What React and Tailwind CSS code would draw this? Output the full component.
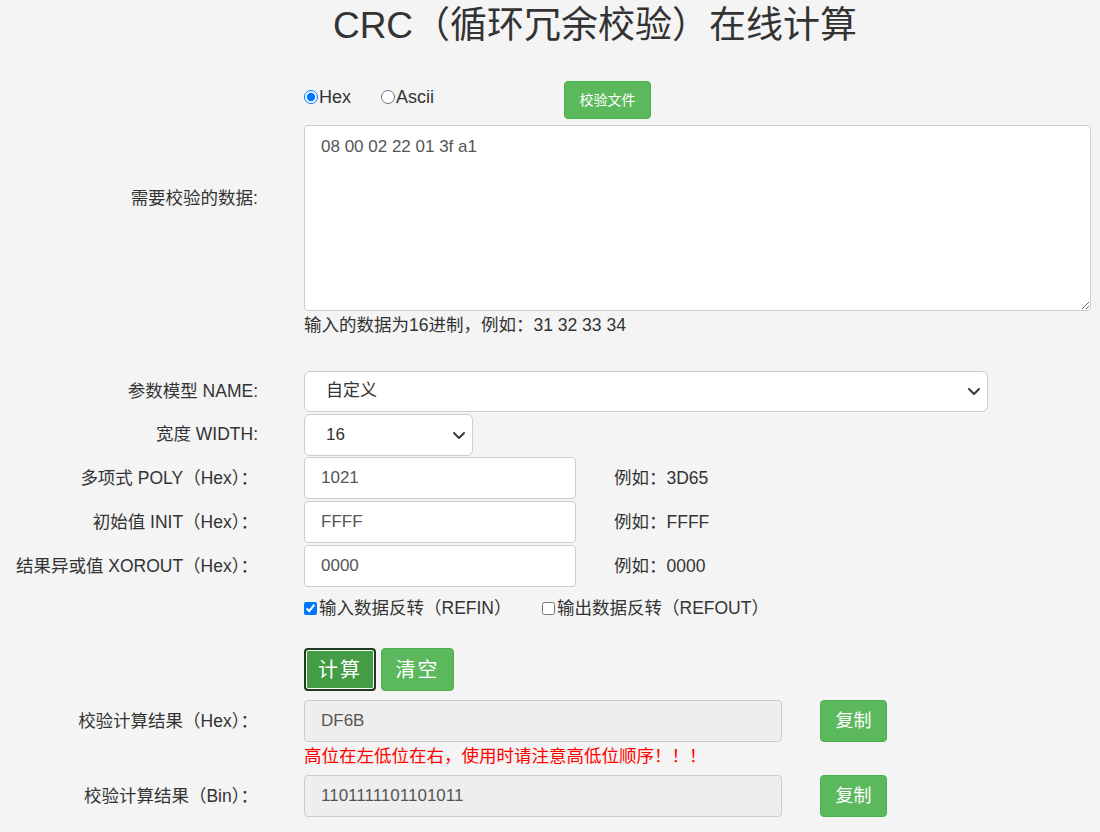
import React from "react";

const font = { fontFamily: '"Liberation Sans", Arial, "Noto Sans CJK SC", sans-serif' };

function Chevron() {
  return (
    <svg className="pointer-events-none absolute right-[6px] top-1/2 -translate-y-1/2" width="14" height="10" viewBox="0 0 14 10">
      <path d="M2 3l5 5 5-5" fill="none" stroke="#343a40" strokeWidth="2" strokeLinecap="round" strokeLinejoin="round" />
    </svg>
  );
}

function Label({ children, className = "" }) {
  return (
    <div className={"w-[258px] shrink-0 text-right text-[17.5px] text-[#333] " + className}>{children}</div>
  );
}

function HexRow({ label, value, example }) {
  return (
    <div className="flex items-center h-[44px]">
      <Label>{label}</Label>
      <div className="ml-[46px] w-[272px] h-[42px] bg-white border border-[#ccc] rounded-[4px] flex items-center pl-[16px] text-[17px] text-[#555]">
        {value}
      </div>
      <div className="ml-[38px] text-[17.5px] text-[#333]">{example}</div>
    </div>
  );
}

export default function App() {
  return (
    <div className="min-h-[832px] w-[1100px] bg-[#f4f4f4] text-[#333]" style={font}>
      <h1 className="text-center text-[37px] leading-[52px] pt-0 pl-[90px] text-[#333] font-normal">
        CRC（循环冗余校验）在线计算
      </h1>

      <div className="flex items-center mt-[29px] h-[38px] pl-[304px]">
        <label className="flex items-center text-[18px] w-[77px] -mt-[6px]">
          <input type="radio" name="t" defaultChecked className="m-0 mr-[1px] w-[14px] h-[14px]" />
          Hex
        </label>
        <label className="flex items-center text-[18px] w-[183px] -mt-[6px]">
          <input type="radio" name="t" className="m-0 mr-[1px] w-[14px] h-[14px]" />
          Ascii
        </label>
        <button className="h-[38px] w-[87px] rounded-[4px] bg-[#5cb85c] border border-[#4cae4c] text-white text-[14px]">
          校验文件
        </button>
      </div>

      <div className="flex items-start mt-[6px]">
        <Label className="pt-[60px]">需要校验的数据:</Label>
        <textarea
          className="ml-[46px] w-[787px] h-[186px] bg-white border border-[#ccc] rounded-[4px] px-[16px] py-[8px] text-[17px] text-[#555] outline-none"
          style={font}
          defaultValue="08 00 02 22 01 3f a1"
        />
      </div>
      <div className="pl-[304px] text-[17.5px] leading-[26px] mt-[1px]">输入的数据为16进制，例如：31 32 33 34</div>

      <div className="flex items-center mt-[32px] h-[42px]">
        <Label>参数模型 NAME:</Label>
        <div className="relative ml-[46px] w-[684px] h-[41px] bg-white border border-[#ccc] rounded-[6px] flex items-center pl-[21px] text-[17px] text-[#333]">
          自定义
          <Chevron />
        </div>
      </div>
      <div className="flex items-center h-[43px] mt-[1px]">
        <Label>宽度 WIDTH:</Label>
        <div className="relative ml-[46px] w-[169px] h-[42px] bg-white border border-[#ccc] rounded-[6px] flex items-center pl-[21px] text-[17px] text-[#333]">
          16
          <Chevron />
        </div>
      </div>

      <HexRow label="多项式 POLY（Hex）：" value="1021" example="例如：3D65" />
      <HexRow label="初始值 INIT（Hex）：" value="FFFF" example="例如：FFFF" />
      <HexRow label="结果异或值 XOROUT（Hex）：" value="0000" example="例如：0000" />

      <div className="flex items-center pl-[304px] mt-[7px] h-[26px] text-[17.5px]">
        <label className="flex items-center w-[238px]">
          <input type="checkbox" defaultChecked className="m-0 mr-[2px] w-[13px] h-[13px]" />
          输入数据反转（REFIN）
        </label>
        <label className="flex items-center">
          <input type="checkbox" className="m-0 mr-[2px] w-[13px] h-[13px]" />
          输出数据反转（REFOUT）
        </label>
      </div>

      <div className="flex pl-[304px] mt-[27px] gap-[5px]">
        <button className="h-[43px] w-[72px] rounded-[4px] bg-[#449d44] border-2 border-[#1e3d1e] ring-1 ring-white ring-inset text-white text-[20px] tracking-[2px]">
          计算
        </button>
        <button className="h-[43px] w-[73px] rounded-[4px] bg-[#5cb85c] border border-[#4cae4c] text-white text-[20px] tracking-[2px]">
          清空
        </button>
      </div>

      <div className="flex items-center mt-[9px] h-[42px]">
        <Label>校验计算结果（Hex）：</Label>
        <div className="ml-[46px] w-[478px] h-[42px] bg-[#eeeeee] border border-[#ccc] rounded-[4px] flex items-center pl-[16px] text-[17px] text-[#555]">
          DF6B
        </div>
        <button className="ml-[38px] h-[42px] w-[67px] rounded-[4px] bg-[#5cb85c] border border-[#4cae4c] text-white text-[18px]">
          复制
        </button>
      </div>
      <div className="pl-[304px] text-[17.5px] leading-[26px] mt-[1px] text-[#ff0000]">高位在左低位在右，使用时请注意高低位顺序！！！</div>

      <div className="flex items-center mt-[6px] h-[42px]">
        <Label>校验计算结果（Bin）：</Label>
        <div className="ml-[46px] w-[478px] h-[42px] bg-[#eeeeee] border border-[#ccc] rounded-[4px] flex items-center pl-[16px] text-[17px] text-[#555]">
          1101111101101011
        </div>
        <button className="ml-[38px] h-[42px] w-[67px] rounded-[4px] bg-[#5cb85c] border border-[#4cae4c] text-white text-[18px]">
          复制
        </button>
      </div>
      <div className="h-[15px]" />
    </div>
  );
}
